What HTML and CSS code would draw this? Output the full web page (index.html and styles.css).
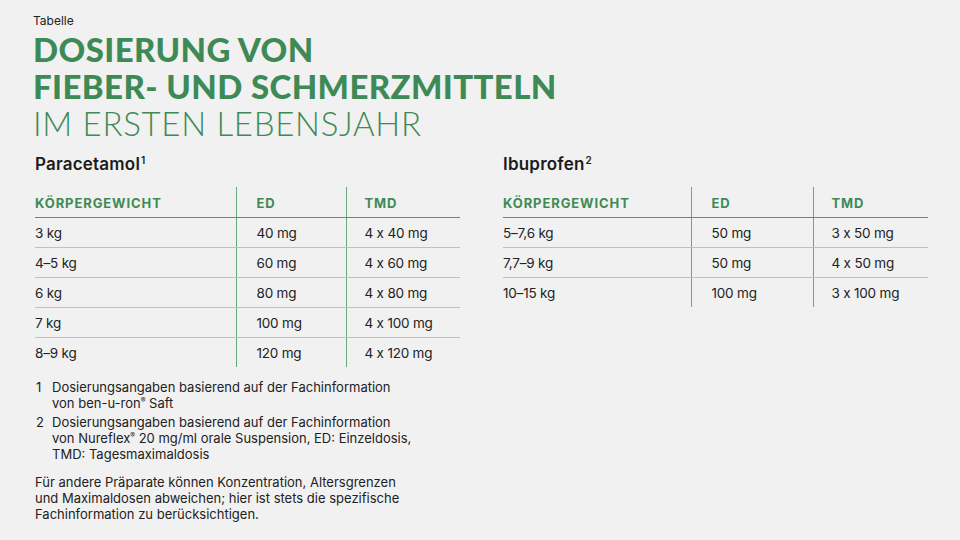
FILE: index.html
```html
<!DOCTYPE html>
<html lang="de">
<head>
<meta charset="utf-8">
<link rel="stylesheet" href="styles.css">
</head>
<body>
<div class="page">
  <div class="kicker">Tabelle</div>
  <h1 class="title"><span class="bold">DOSIERUNG VON<br>FIEBER- UND SCHMERZMITTELN</span><br><span class="light">IM ERSTEN LEBENSJAHR</span></h1>
  <div class="tables">
    <section class="block left">
      <h2 class="drug">Paracetamol<span class="sup">1</span></h2>
      <table class="dose">
        <thead><tr><th class="c1">KÖRPERGEWICHT</th><th class="c2">ED</th><th class="c3">TMD</th></tr></thead>
        <tbody>
          <tr><td>3 kg</td><td>40 mg</td><td>4 x 40 mg</td></tr>
          <tr><td>4–5 kg</td><td>60 mg</td><td>4 x 60 mg</td></tr>
          <tr><td>6 kg</td><td>80 mg</td><td>4 x 80 mg</td></tr>
          <tr><td>7 kg</td><td>100 mg</td><td>4 x 100 mg</td></tr>
          <tr><td>8–9 kg</td><td>120 mg</td><td>4 x 120 mg</td></tr>
        </tbody>
      </table>
    </section>
    <section class="block right">
      <h2 class="drug">Ibuprofen<span class="sup">2</span></h2>
      <table class="dose">
        <thead><tr><th class="c1">KÖRPERGEWICHT</th><th class="c2">ED</th><th class="c3">TMD</th></tr></thead>
        <tbody>
          <tr><td>5–7,6 kg</td><td>50 mg</td><td>3 x 50 mg</td></tr>
          <tr><td>7,7–9 kg</td><td>50 mg</td><td>4 x 50 mg</td></tr>
          <tr><td>10–15 kg</td><td>100 mg</td><td>3 x 100 mg</td></tr>
        </tbody>
      </table>
    </section>
  </div>
  <ol class="notes">
    <li><span class="num">1</span><span>Dosierungsangaben basierend auf der Fachinformation<br>von ben-u-ron<span class="reg">®</span> Saft</span></li>
    <li><span class="num">2</span><span>Dosierungsangaben basierend auf der Fachinformation<br>von Nureflex<span class="reg">®</span> 20 mg/ml orale Suspension, ED: Einzeldosis,<br>TMD: Tagesmaximaldosis</span></li>
  </ol>
  <p class="remark">Für andere Präparate können Konzentration, Altersgrenzen<br>und Maximaldosen abweichen; hier ist stets die spezifische<br>Fachinformation zu berücksichtigen.</p>
</div>
</body>
</html>
```
FILE: styles.css
```css
* { box-sizing: border-box; }
html, body { margin: 0; padding: 0; }
body {
  width: 960px; height: 540px; overflow: hidden;
  background: #f1f1f1;
  font-family: Inter, "Noto Sans", sans-serif;
  color: #1e1e1e;
}
.page { padding: 13px 0 0 33px; }
.kicker { font-size: 12px; line-height: 16px; color: #222; }
.title {
  margin: 2px 0 0 0;
  font-family: Lato, "Noto Sans", sans-serif;
  font-size: 33px;
  line-height: 37px;
  color: #3e8a57;
  letter-spacing: 0.4px;
  font-weight: 400;
}
.title .bold { font-weight: 900; }
.title .light { font-weight: 300; letter-spacing: 0.7px; }
.tables { display: flex; margin-top: 12px; }
.block { width: 425px; }
.block.left { margin-left: 2px; }
.block.right { margin-left: 43px; }
.drug {
  margin: 0; font-size: 17px; line-height: 20px; font-weight: 600; color: #1b1b1b; letter-spacing: 0.2px;
}
.drug .sup { font-size: 10px; line-height: 0; vertical-align: 6px; margin-left: 1px; }
.dose { border-collapse: collapse; margin-top: 13px; width: 425px; table-layout: fixed; }
.dose th, .dose td { height: 30px; padding: 0; text-align: left; font-size: 13.5px; }
.dose th {
  color: #3e8a57; font-weight: 700; letter-spacing: 0.9px; font-size: 13px;
  border-bottom: 1px solid #4f9868;
  padding-top: 2px;
}
.dose td { border-bottom: 1px solid #a9cdb5; color: #222; font-weight: 400; padding-top: 1px; letter-spacing: -0.2px; }
.dose tbody tr:last-child td { border-bottom: none; }
.dose th + th, .dose td + td { border-left: 1px solid #6aa880; }
.left .c1 { width: 201px; }
.left .c2 { width: 110px; }
.right .c1 { width: 188px; }
.right .c2 { width: 122px; }
.dose th:nth-child(2), .dose td:nth-child(2) { padding-left: 20px; }
.dose th:nth-child(3), .dose td:nth-child(3) { padding-left: 18px; }
.notes { list-style: none; margin: 12px 0 0 3px; padding: 0; font-size: 13px; line-height: 16px; color: #222; }
.notes li { display: flex; margin-bottom: 3px; }
.notes .num { width: 16px; flex: none; }
.reg { font-size: 7px; line-height: 0; vertical-align: 5px; font-family: Inter, sans-serif; }
.remark { margin: 12px 0 0 2px; font-size: 13px; line-height: 16px; color: #222; }
```
